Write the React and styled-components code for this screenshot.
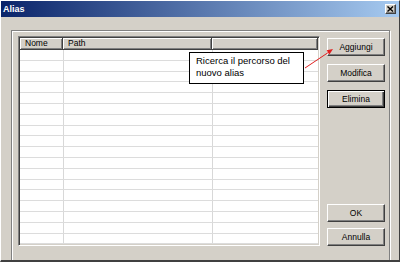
import React from "react";
import styled, { createGlobalStyle } from "styled-components";

const Global = createGlobalStyle`
  html, body { margin: 0; padding: 0; background: #d4d0c8; }
  body { font-family: "Liberation Sans", Arial, sans-serif; }
  * { box-sizing: border-box; }
`;

const Window = styled.div`
  position: relative;
  width: 400px;
  height: 262px;
  background: #d4d0c8;
  border-top: 1px solid #ffffff;
  border-left: 1px solid #ffffff;
  border-right: 1px solid #404040;
  border-bottom: 2px solid #404040;
  display: flex;
  flex-direction: column;
  overflow: hidden;
`;

const TitleBar = styled.div`
  height: 16px;
  flex: none;
  display: flex;
  align-items: center;
  justify-content: space-between;
  padding: 0 3px 0 2px;
  background: linear-gradient(to right, #0a246a, #a6caf0);
`;

const TitleText = styled.span`
  color: #ffffff;
  font-weight: bold;
  font-size: 9px;
  line-height: 16px;
`;

const CloseButton = styled.div`
  width: 11px;
  height: 10px;
  background: #d4d0c8;
  border: 1px solid;
  border-color: #ffffff #404040 #404040 #ffffff;
  box-shadow: inset -1px -1px 0 #808080;
  display: flex;
  align-items: center;
  justify-content: center;
`;

const Body = styled.div`
  flex: 1;
  display: flex;
  padding: 13px 9px 10px 10px;
`;

const GroupBox = styled.div`
  flex: 1;
  display: flex;
  gap: 7px;
  border: 1px solid #808080;
  box-shadow: inset 1px 1px 0 #ffffff, 1px 1px 0 #ffffff;
  padding: 5px 4px 15px 6px;
`;

const ListView = styled.div`
  flex: 1;
  display: flex;
  flex-direction: column;
  background: #ffffff;
  border: 1px solid;
  border-color: #808080 #ffffff #ffffff #808080;
  box-shadow: inset 1px 1px 0 #404040, inset -1px -1px 0 #d4d0c8;
  padding: 1px;
  overflow: hidden;
`;

const COLS = "43px 149px 1fr";

const Header = styled.div`
  display: grid;
  grid-template-columns: ${COLS};
  height: 12px;
  flex: none;
`;

const HeaderCell = styled.div`
  background: #d4d0c8;
  border-right: 1px solid #404040;
  border-bottom: 1px solid #404040;
  box-shadow: inset 1px 1px 0 #ffffff, inset -1px -1px 0 #808080;
  font-size: 8.5px;
  line-height: 11px;
  color: #000;
  padding-left: 5px;
  white-space: nowrap;
  overflow: hidden;
`;

const Row = styled.div`
  display: grid;
  grid-template-columns: 44px 149px 1fr;
  height: 10.8px;
  flex: none;
  border-bottom: 1px solid #dcdcdc;
`;

const Cell = styled.div`
  border-right: ${(p) => (p.$last ? "none" : "1px solid #d8d8d8")};
`;

const ButtonColumn = styled.div`
  width: 58px;
  flex: none;
  display: flex;
  flex-direction: column;
  padding-top: 2px;
`;

const ButtonGroup = styled.div`
  display: flex;
  flex-direction: column;
  gap: ${(p) => p.$gap}px;
  margin-top: ${(p) => (p.$bottom ? "auto" : "0")};
`;

const Button = styled.div`
  height: 18px;
  display: flex;
  align-items: center;
  justify-content: center;
  background: #d4d0c8;
  font-size: 8.5px;
  color: #000;
  border: 1px solid;
  border-color: ${(p) => (p.$default ? "#000000" : "#ffffff #404040 #404040 #ffffff")};
  box-shadow: ${(p) =>
    p.$default
      ? "inset 1px 1px 0 #ffffff, inset -1px -1px 0 #404040, inset -2px -2px 0 #808080"
      : "inset -1px -1px 0 #808080"};
`;

const Callout = styled.div`
  position: absolute;
  left: 188px;
  top: 51px;
  width: 115px;
  height: 32px;
  background: #ffffff;
  border: 1px solid #000000;
  padding: 2px 0 0 6px;
  font-size: 9.5px;
  line-height: 12px;
  color: #000;
`;

const ArrowSvg = styled.svg`
  position: absolute;
  left: 0;
  top: 0;
  pointer-events: none;
`;

export default function App() {
  const rows = Array.from({ length: 18 });
  return (
    <>
      <Global />
      <Window>
        <TitleBar>
          <TitleText>Alias</TitleText>
          <CloseButton>
            <svg width="7" height="6" viewBox="0 0 7 6">
              <path d="M0.5 0.5 L6 5.5 M6 0.5 L0.5 5.5" stroke="#000" strokeWidth="1.4" />
            </svg>
          </CloseButton>
        </TitleBar>
        <Body>
          <GroupBox>
            <ListView>
              <Header>
                <HeaderCell>Nome</HeaderCell>
                <HeaderCell>Path</HeaderCell>
                <HeaderCell />
              </Header>
              {rows.map((_, i) => (
                <Row key={i}>
                  <Cell />
                  <Cell />
                  <Cell $last />
                </Row>
              ))}
            </ListView>
            <ButtonColumn>
              <ButtonGroup $gap={8}>
                <Button>Aggiungi</Button>
                <Button>Modifica</Button>
                <Button $default>Elimina</Button>
              </ButtonGroup>
              <ButtonGroup $gap={6} $bottom>
                <Button>OK</Button>
                <Button>Annulla</Button>
              </ButtonGroup>
            </ButtonColumn>
          </GroupBox>
        </Body>
        <Callout>
          Ricerca il percorso del
          <br />
          nuovo alias
        </Callout>
        <ArrowSvg width="400" height="262" viewBox="-1 -1 400 262">
          <line x1="303" y1="66" x2="327" y2="50" stroke="#e02020" strokeWidth="1" />
          <polygon points="331,47 327.4,52.4 324.6,48.2" fill="#e02020" />
        </ArrowSvg>
      </Window>
    </>
  );
}
